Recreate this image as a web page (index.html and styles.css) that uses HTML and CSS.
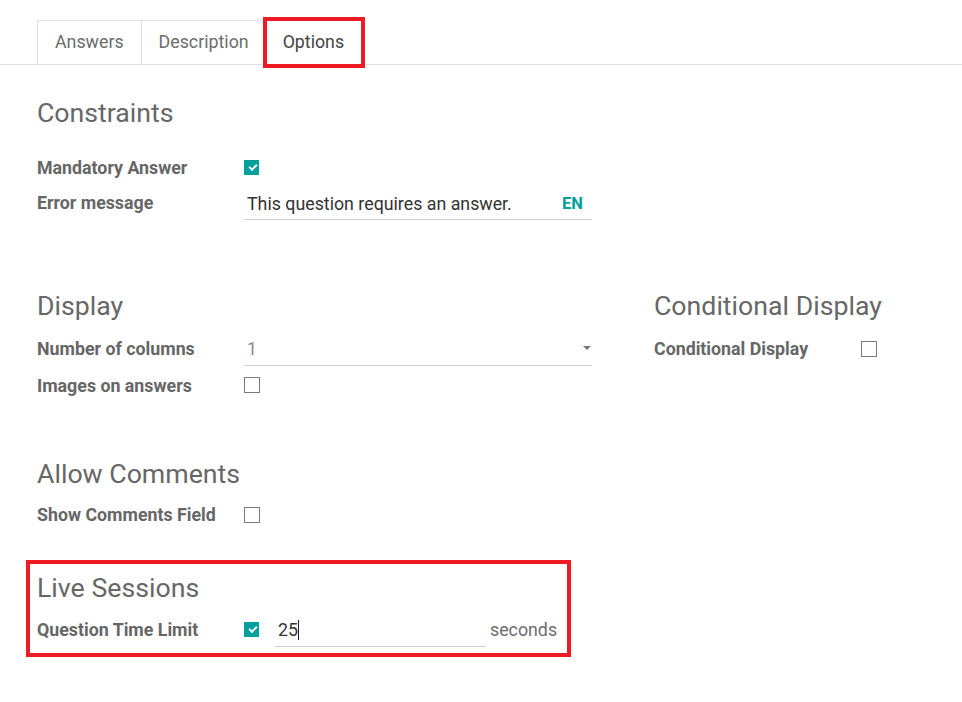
FILE: index.html
```html
<!DOCTYPE html>
<html>
<head>
<meta charset="utf-8">
<link rel="stylesheet" href="styles.css">
</head>
<body>
<div class="tabs">
  <div class="tab">Answers</div>
  <div class="tab">Description</div>
  <div class="tab active">Options</div>
</div>
<div class="content">
  <section class="group g-constraints">
    <h2 class="sep">Constraints</h2>
    <div class="rows first">
      <div class="row"><div class="label">Mandatory Answer</div><div class="field"><span class="cb checked"></span></div></div>
      <div class="row"><div class="label">Error message</div><div class="field"><div class="input wide"><span class="val">This question requires an answer.</span><span class="lang">EN</span></div></div></div>
    </div>
  </section>

  <div class="two-col">
    <section class="group col-left">
      <h2 class="sep">Display</h2>
      <div class="rows">
        <div class="row"><div class="label">Number of columns</div><div class="field"><div class="input wide select"><span class="muted">1</span><span class="caret"></span></div></div></div>
        <div class="row tall"><div class="label">Images on answers</div><div class="field"><span class="cb"></span></div></div>
      </div>
    </section>
    <section class="group col-right">
      <h2 class="sep">Conditional Display</h2>
      <div class="rows">
        <div class="row"><div class="label">Conditional Display</div><div class="field"><span class="cb"></span></div></div>
      </div>
    </section>
  </div>

  <section class="group g-comments">
    <h2 class="sep">Allow Comments</h2>
    <div class="rows">
      <div class="row"><div class="label">Show Comments Field</div><div class="field"><span class="cb"></span></div></div>
    </div>
  </section>

  <section class="group g-live">
    <h2 class="sep">Live Sessions</h2>
    <div class="rows">
      <div class="row"><div class="label">Question Time Limit</div><div class="field"><span class="cb checked"></span><div class="input short"><span class="val cursor">25</span></div><span class="unit">seconds</span></div></div>
    </div>
  </section>
</div>
</body>
</html>
```

FILE: styles.css
```css
* { box-sizing: border-box; }
html, body { margin: 0; padding: 0; background: #fff; }
body {
  font-family: Roboto, "Liberation Sans", sans-serif;
  color: #666;
  width: 962px;
  height: 702px;
  overflow: hidden;
}

.tabs {
  display: flex;
  padding: 20px 0 0 37px;
  border-bottom: 1px solid #dcdfe3;
  height: 65px;
}
.tab {
  height: 44px;
  line-height: 41px;
  padding: 0 17px;
  font-size: 17.8px;
  color: #6c6c6c;
  border: 1px solid #dcdfe3;
  border-bottom: none;
  margin-right: -1px;
  background: #fff;
}
.tab.active {
  color: #444;
  position: relative;
  z-index: 1;
  margin-bottom: -1px;
  height: 45px;
  outline: 4px solid #ed1c24;
  outline-offset: -1px;
  padding: 0 17px 0 16px;
}

.content { padding: 0 37px; }

.sep {
  margin: 0;
  font-size: 26.7px;
  font-weight: 400;
  line-height: 36px;
  color: #676767;
}
.rows { display: flex; flex-direction: column; }
.row { display: flex; align-items: center; height: 35px; }
.row.tall { height: 38px; }
.label {
  width: 207px;
  flex: none;
  font-weight: 700;
  font-size: 17.8px;
  color: #666;
}
.field { display: flex; align-items: center; }

.g-constraints { margin-top: 30px; }
.g-constraints .rows.first { margin-top: 19px; }

.two-col { display: flex; margin-top: 68px; }
.col-left { width: 555px; flex: none; }
.col-right { margin-left: 62px; }
.two-col .rows { margin-top: 7px; }

.g-comments { margin-top: 52px; }
.g-comments .rows { margin-top: 5px; }

.g-live {
  margin-top: 28px;
  margin-left: -11px;
  width: 545px;
  border: 4px solid #ed1c24;
  padding: 6px 9px 6px 7px;
}
.g-live .rows { margin-top: 6px; }

.cb {
  display: inline-block;
  width: 16px;
  height: 16px;
  border: 1px solid #7a7a7a;
  background: #fff;
  position: relative;
}
.cb.checked {
  background: #00a09d;
  border-color: #00a09d;
  width: 15px;
  height: 15px;
}
.cb.checked::after {
  content: "";
  position: absolute;
  left: 4px;
  top: 3px;
  width: 6px;
  height: 3px;
  border-left: 2px solid #fff;
  border-bottom: 2px solid #fff;
  transform: rotate(-45deg);
}

.input {
  display: flex;
  align-items: center;
  height: 33px;
  border-bottom: 1px solid #cfcfcf;
  font-size: 17.8px;
  color: #333;
  padding-left: 3px;
}
.input.wide { width: 348px; justify-content: space-between; padding-right: 7px; margin-top: 2px; }
.input.select { padding-top: 0; }
.input.short { width: 211px; margin-left: 16px; margin-top: 2px; }
.lang { color: #00a09d; font-weight: 700; font-size: 16.5px; margin-right: 2px; }
.muted { color: #8a8a8a; margin-top: -2px; }
.caret {
  width: 0; height: 0;
  border-left: 4px solid transparent;
  border-right: 4px solid transparent;
  border-top: 4px solid #777;
  margin-right: -6px;
  margin-top: -2px;
}
.cursor { border-right: 1px solid #222; padding-right: 0; line-height: 20px; }
.unit { margin-left: 4px; font-size: 17.8px; color: #6c6c6c; }
```
